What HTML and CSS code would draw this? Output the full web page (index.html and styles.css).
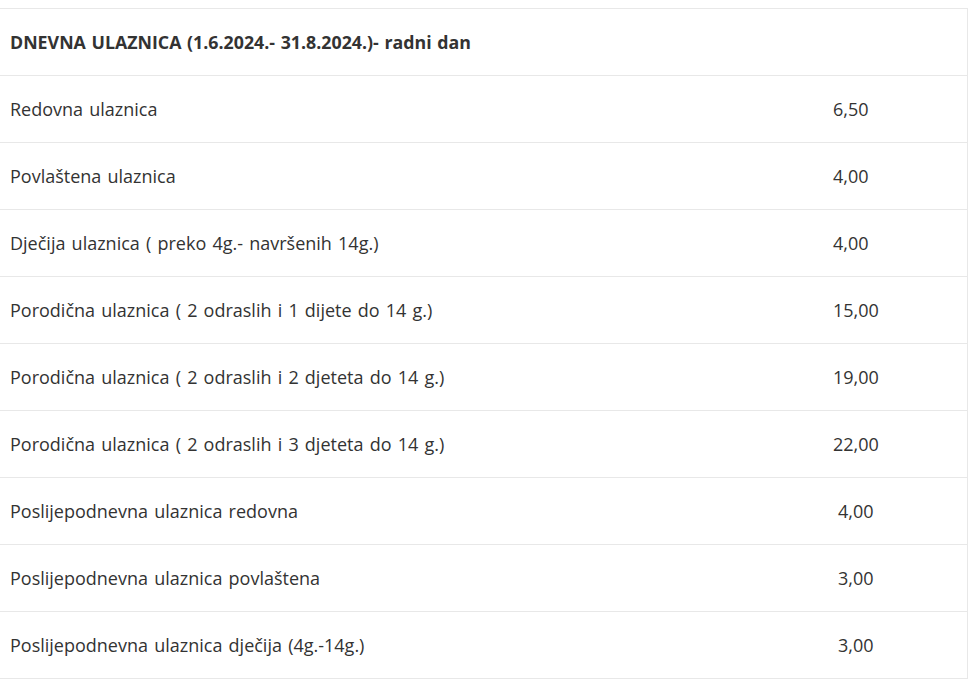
FILE: index.html
```html
<!DOCTYPE html>
<html>
<head>
<meta charset="utf-8">
<link rel="stylesheet" href="styles.css">
</head>
<body>
<table class="prices">
<colgroup><col class="col-name"><col class="col-price"></colgroup>
<tbody>
<tr class="head"><td colspan="2">DNEVNA ULAZNICA (1.6.2024.- 31.8.2024.)- radni dan</td></tr>
<tr><td>Redovna ulaznica</td><td>6,50</td></tr>
<tr><td>Povlaštena ulaznica</td><td>4,00</td></tr>
<tr><td>Dječija ulaznica ( preko 4g.- navršenih 14g.)</td><td>4,00</td></tr>
<tr><td>Porodična ulaznica ( 2 odraslih i 1 dijete do 14 g.)</td><td>15,00</td></tr>
<tr><td>Porodična ulaznica ( 2 odraslih i 2 djeteta do 14 g.)</td><td>19,00</td></tr>
<tr><td>Porodična ulaznica ( 2 odraslih i 3 djeteta do 14 g.)</td><td>22,00</td></tr>
<tr><td>Poslijepodnevna ulaznica redovna</td><td class="shifted">4,00</td></tr>
<tr><td>Poslijepodnevna ulaznica povlaštena</td><td class="shifted">3,00</td></tr>
<tr><td>Poslijepodnevna ulaznica dječija (4g.-14g.)</td><td class="shifted">3,00</td></tr>
</tbody>
</table>
</body>
</html>
```
FILE: styles.css
```css
html, body {
  margin: 0;
  padding: 0;
  background: #fff;
}
body {
  padding-top: 8px;
  font-family: "Open Sans", sans-serif;
  color: #333;
}
.prices {
  width: 968px;
  border-collapse: collapse;
  border-top: 1px solid #e8e8e8;
  border-right: 1px solid #e8e8e8;
  table-layout: fixed;
}
.col-name {
  width: 823px;
}
.prices td {
  height: 67px;
  padding: 0 0 0 10px;
  border-bottom: 1px solid #e8e8e8;
  font-size: 18px;
  word-spacing: 1.5px;
  vertical-align: middle;
  box-sizing: border-box;
}
.prices tr.head td {
  font-weight: bold;
  font-size: 17.8px;
  word-spacing: 1px;
}
.prices td.shifted {
  padding-left: 15px;
}
```
